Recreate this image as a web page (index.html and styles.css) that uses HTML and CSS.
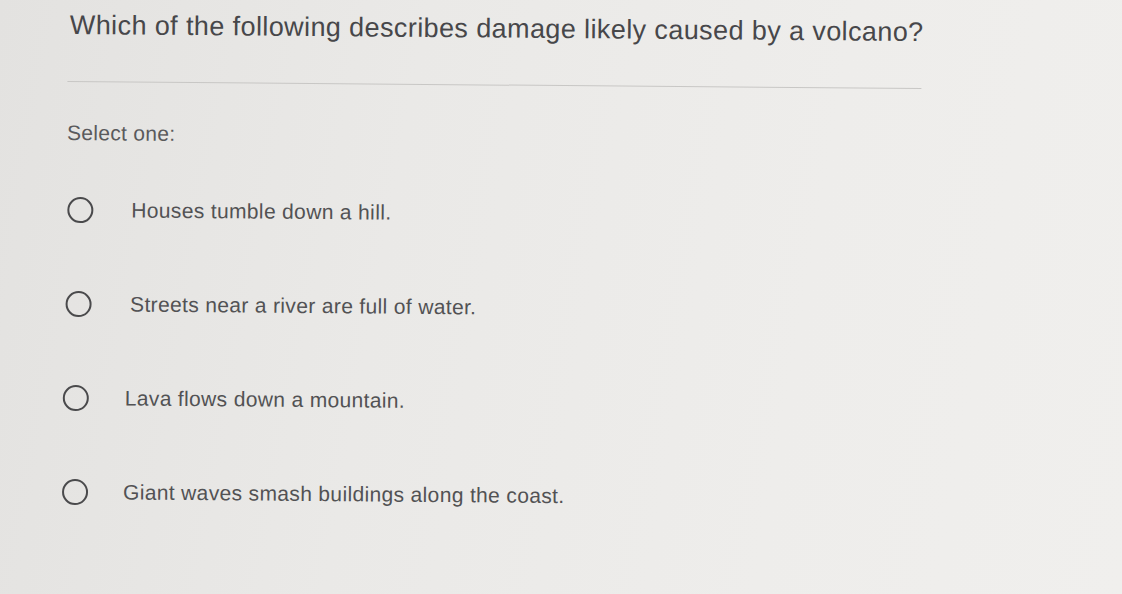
FILE: index.html
```html
<!DOCTYPE html>
<html>
<head>
<meta charset="utf-8">
<link rel="stylesheet" href="styles.css">
</head>
<body>
<div class="page">
  <h1 class="question">Which of the following describes damage likely caused by a volcano?</h1>
  <div class="rule"></div>
  <div class="prompt">Select one:</div>
  <div class="options">
    <label class="option o1"><span class="radio"></span><span class="text">Houses tumble down a hill.</span></label>
    <label class="option o2"><span class="radio"></span><span class="text">Streets near a river are full of water.</span></label>
    <label class="option o3"><span class="radio"></span><span class="text">Lava flows down a mountain.</span></label>
    <label class="option o4"><span class="radio"></span><span class="text">Giant waves smash buildings along the coast.</span></label>
  </div>
</div>
</body>
</html>
```
FILE: styles.css
```css
html, body {
  margin: 0;
  padding: 0;
  height: 100%;
}
body {
  background: linear-gradient(100deg, #e3e2e0 0%, #eae9e7 35%, #eeedeb 70%, #f0efed 100%);
  font-family: "Liberation Sans", Arial, sans-serif;
  overflow: hidden;
}
.page {
  padding: 9px 0 0 68px;
  width: 854px;
  transform: rotate(0.47deg);
  transform-origin: 68px 9px;
}
.question {
  margin: 0 0 0 2px;
  font-size: 27px;
  font-weight: normal;
  color: #47474a;
  line-height: 32px;
  letter-spacing: 0.4px;
  white-space: nowrap;
}
.rule {
  margin-top: 40px;
  height: 1px;
  background: #c8c7c5;
}
.prompt {
  margin-top: 39px;
  font-size: 21px;
  color: #5a5a5c;
  line-height: 24px;
  letter-spacing: 0.3px;
}
.options {
  margin-top: 52px;
  display: flex;
  flex-direction: column;
  gap: 68px;
}
.option {
  display: flex;
  align-items: center;
  height: 26px;
}
.radio {
  box-sizing: border-box;
  width: 26px;
  height: 26px;
  border: 2.5px solid #4a4a4c;
  border-radius: 50%;
  flex: none;
}
.text {
  margin-left: 38px;
  font-size: 21px;
  color: #525254;
  letter-spacing: 0.35px;
  white-space: nowrap;
}
.o1 { margin-left: 1px; }
.o2 { margin-left: 0; }
.o2 .text { margin-left: 38.5px; }
.o3 { margin-left: -2px; }
.o3 .text { margin-left: 36px; }
.o4 { margin-left: -2.5px; }
.o4 .text { margin-left: 35.5px; }
```
